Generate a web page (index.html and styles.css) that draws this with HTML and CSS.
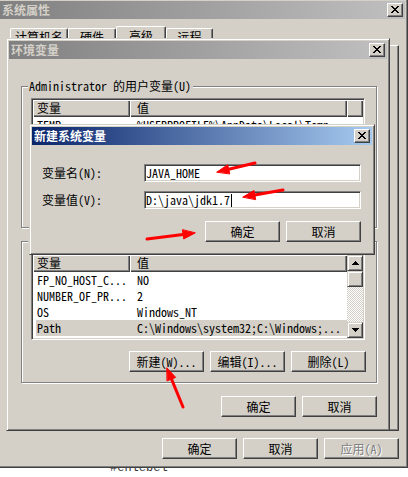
FILE: index.html
```html
<!DOCTYPE html>
<html lang="zh-CN">
<head>
<meta charset="utf-8">
<title>环境变量</title>
<link rel="stylesheet" href="styles.css">
</head>
<body>
<div class="desktop">
  <div class="page-text">#ehlebel</div>

  <div class="win sys">
    <div class="titlebar">
      <span class="title">系统属性</span>
      <span class="close"><svg width="14" height="12" viewBox="1 1 14 12"><path d="M4 3h2v1h1v1h2V4h1V3h2v1h-1v1h-1v1h-1v1h1v1h1v1h1v1h-2V9h-1V8H7v1H6v1H4V9h1V8h1V7h1V6H6V5H5V4H4z"/></svg></span>
    </div>
    <div class="tabs">
      <div class="tab t1">计算机名</div>
      <div class="tab t2">硬件</div>
      <div class="tab sel">高级</div>
      <div class="tab t4">远程</div>
    </div>
    <div class="tabpanel"></div>
    <div class="btnrow sys-btns">
      <button class="btn">确定</button>
      <button class="btn">取消</button>
      <button class="btn disabled">应用(A)</button>
    </div>
  </div>

  <div class="win env">
    <div class="titlebar">
      <span class="title">环境变量</span>
      <span class="close"><svg width="14" height="12" viewBox="1 1 14 12"><path d="M4 3h2v1h1v1h2V4h1V3h2v1h-1v1h-1v1h-1v1h1v1h1v1h1v1h-2V9h-1V8H7v1H6v1H4V9h1V8h1V7h1V6H6V5H5V4H4z"/></svg></span>
    </div>
    <div class="env-body">
      <div class="group g1">
        <div class="legend">Administrator 的用户变量(U)</div>
        <div class="list">
          <div class="lmain">
            <div class="lhead"><div class="hc c1">变量</div><div class="hc c2">值</div><div class="hc c3"></div></div>
            <div class="lrow"><span class="cell c1">TEMP</span><span class="cell c2">%USERPROFILE%\AppData\Local\Temp</span></div>
          </div>
        </div>
        <div class="btnrow">
          <button class="btn"></button>
          <button class="btn"></button>
          <button class="btn"></button>
        </div>
      </div>

      <div class="group g2">
        <div class="legend"></div>
        <div class="list">
          <div class="lmain">
            <div class="lhead"><div class="hc c1">变量</div><div class="hc c2 grow">值</div></div>
            <div class="lrow"><span class="cell c1">FP_NO_HOST_C...</span><span class="cell c2">NO</span></div>
            <div class="lrow"><span class="cell c1">NUMBER_OF_PR...</span><span class="cell c2">2</span></div>
            <div class="lrow"><span class="cell c1">OS</span><span class="cell c2">Windows_NT</span></div>
            <div class="lrow sel"><span class="cell c1">Path</span><span class="cell c2">C:\Windows\system32;C:\Windows;...</span></div>
          </div>
          <div class="vscroll">
            <div class="sb-btn"><svg width="14" height="14" viewBox="1 1 14 14"><path d="M8 6h1v1h1v1h1v1h1v1H5V9h1V8h1V7h1z"/></svg></div>
            <div class="sb-thumb"></div>
            <div class="sb-track"></div>
            <div class="sb-btn"><svg width="14" height="14" viewBox="1 1 14 14"><path d="M5 6h7v1h-1v1h-1v1h-1v1H8V9H7V8H6V7H5z"/></svg></div>
          </div>
        </div>
        <div class="btnrow">
          <button class="btn">新建(W)...</button>
          <button class="btn">编辑(I)...</button>
          <button class="btn">删除(L)</button>
        </div>
      </div>

      <div class="btnrow env-btns">
        <button class="btn">确定</button>
        <button class="btn">取消</button>
      </div>
    </div>
  </div>

  <div class="win newvar">
    <div class="titlebar active">
      <span class="title">新建系统变量</span>
      <span class="close"><svg width="14" height="12" viewBox="1 1 14 12"><path d="M4 3h2v1h1v1h2V4h1V3h2v1h-1v1h-1v1h-1v1h1v1h1v1h1v1h-2V9h-1V8H7v1H6v1H4V9h1V8h1V7h1V6H6V5H5V4H4z"/></svg></span>
    </div>
    <div class="nv-body">
      <div class="form">
        <label class="flabel">变量名(N):</label>
        <div class="input">JAVA_HOME</div>
        <label class="flabel">变量值(V):</label>
        <div class="input">D:\java\jdk1.7<span class="caret"></span></div>
      </div>
      <div class="btnrow nv-btns">
        <button class="btn">确定</button>
        <button class="btn">取消</button>
      </div>
    </div>
  </div>

  <svg class="arrows" width="408" height="477" viewBox="0 0 408 477">
    <g fill="#f00" stroke="#f00" stroke-linecap="round">
      <line x1="255" y1="163" x2="228.7" y2="169.2" stroke-width="3"/>
      <polygon points="217,172 227.7,164.8 229.7,173.6" stroke-width="1"/>
      <line x1="283" y1="190" x2="254.8" y2="194.9" stroke-width="3"/>
      <polygon points="243,197 254,190.5 255.6,199.3" stroke-width="1"/>
      <line x1="147" y1="239" x2="183.1" y2="234.5" stroke-width="3"/>
      <polygon points="195,233 183.7,239 182.5,230" stroke-width="1"/>
      <line x1="183" y1="407" x2="171.5" y2="379.1" stroke-width="3"/>
      <polygon points="167,368 175.7,377.4 167.3,380.8" stroke-width="1"/>
    </g>
  </svg>
</div>
</body>
</html>
```

FILE: styles.css
```css
* { box-sizing: border-box; }

body {
  margin: 0;
  background: #fff;
  font-family: "Noto Sans Mono CJK SC", "Noto Sans CJK SC", "Liberation Mono", monospace;
  font-size: 12px;
  color: #000;
}

.desktop {
  position: relative;
  width: 408px;
  height: 477px;
  overflow: hidden;
  background: #fff;
}

.page-text {
  padding: 462px 0 0 110px;
  font: 12px/12px "Liberation Mono", monospace;
  color: #333;
}

/* classic window frame */
.win {
  position: absolute;
  display: flex;
  flex-direction: column;
  background: #d4d0c8;
  border: 1px solid;
  border-color: #d4d0c8 #404040 #404040 #d4d0c8;
  box-shadow: inset 1px 1px #fff, inset -1px -1px #808080;
  padding: 2px;
}

.sys { left: -3px; top: -2px; width: 411px; height: 470px; }
.env { left: 6px; top: 38px; width: 384px; height: 393px; }
.newvar { left: 29px; top: 124px; width: 346px; height: 131px; }

.titlebar {
  flex: none;
  height: 18px;
  display: flex;
  align-items: flex-start;
  justify-content: space-between;
  padding-left: 2px;
  background: linear-gradient(90deg, #808080, #c0c0c0);
}
.titlebar.active { background: linear-gradient(90deg, #0a246a, #a6caf0); }

.title {
  font-family: "Noto Sans CJK SC", sans-serif;
  font-weight: bold;
  font-size: 12px;
  line-height: 18px;
  color: #d4d0c8;
}
.active .title { color: #fff; }

.close {
  width: 16px;
  height: 14px;
  margin: 2px 2px 0 0;
  background: #d4d0c8;
  border: 1px solid;
  border-color: #fff #404040 #404040 #fff;
  box-shadow: inset -1px -1px #808080;
}
.close svg { display: block; }

/* tabs of the 系统属性 window */
.tabs {
  flex: none;
  display: flex;
  align-items: flex-end;
  height: 19px;
  margin: 7px 0 0 10px;
}
.tab {
  height: 17px;
  padding-top: 2px;
  text-align: center;
  line-height: 12px;
  font-family: "Noto Sans CJK SC", sans-serif;
  border: 1px solid;
  border-bottom: 0;
  border-color: #fff #404040 transparent #fff;
  box-shadow: inset -1px 0 #808080;
  border-radius: 2px 2px 0 0;
}
.t1 { width: 58px; }
.t2 { width: 48px; }
.tab.sel { width: 50px; height: 19px; padding-top: 3px; }
.t4 { width: 47px; }

.tabpanel {
  flex: none;
  height: 386px;
  margin: 0 6px 0 8px;
  border: 1px solid;
  border-color: #fff #404040 #404040 #fff;
  box-shadow: inset -1px -1px #808080;
}

/* buttons */
.btnrow {
  flex: none;
  display: flex;
  justify-content: flex-end;
  gap: 6px;
}
.btn {
  width: 75px;
  height: 21px;
  padding: 0;
  display: flex;
  align-items: center;
  justify-content: center;
  font: inherit;
  line-height: 12px;
  color: #000;
  background: #d4d0c8;
  border: 1px solid;
  border-color: #fff #404040 #404040 #fff;
  box-shadow: inset -1px -1px #808080;
  border-radius: 0;
}
.btn.disabled { color: #808080; text-shadow: 1px 1px #fff; }

.sys-btns { margin-top: 7px; padding-right: 6px; }

/* 环境变量 body */
.env-body {
  flex: 1;
  display: flex;
  flex-direction: column;
  padding: 0 10px 0 12px;
}

.group {
  flex: none;
  height: 142px;
  display: flex;
  flex-direction: column;
  border: 1px solid #808080;
  box-shadow: inset 1px 1px #fff, 1px 1px #fff;
  padding: 0 10px 10px 9px;
}
.g1 { margin-top: 27px; }
.g2 { margin-top: 13px; }

.legend {
  align-self: flex-start;
  height: 12px;
  min-width: 60px;
  line-height: 12px;
  margin: -7px 0 0 -3px;
  padding: 0 2px 0 1px;
  background: #d4d0c8;
  white-space: nowrap;
}

.list {
  flex: none;
  height: 87px;
  margin: 6px 1px 0 0;
  display: flex;
  overflow: hidden;
  background: #fff;
  border: 1px solid;
  border-color: #808080 #fff #fff #808080;
  box-shadow: inset 1px 1px #404040, inset -1px -1px #d4d0c8;
  padding: 1px;
}
.group .btnrow { margin-top: 11px; }

.lmain { flex: 1; min-width: 0; }

.lhead { display: flex; height: 17px; }
.hc {
  height: 17px;
  line-height: 16px;
  padding-left: 4px;
  background: #d4d0c8;
  box-shadow: inset 1px 1px #fff, inset -1px -1px #404040, inset -2px -2px #808080;
}
.hc.c1 { width: 97px; }
.hc.c2 { width: 217px; padding-left: 7px; }
.hc.c2.grow { flex: 1; }
.hc.c3 { flex: 1; }

.lrow {
  display: flex;
  height: 16px;
  line-height: 16px;
  margin-left: 3px;
  white-space: nowrap;
}
.lrow.sel { background: #d4d0c8; }
.cell.c1 { width: 94px; padding-left: 1px; flex: none; }
.cell.c2 { padding-left: 7px; overflow: hidden; }

.vscroll {
  flex: none;
  width: 16px;
  display: flex;
  flex-direction: column;
}
.sb-btn, .sb-thumb {
  flex: none;
  height: 16px;
  background: #d4d0c8;
  border: 1px solid;
  border-color: #d4d0c8 #404040 #404040 #d4d0c8;
  box-shadow: inset 1px 1px #fff, inset -1px -1px #808080;
}
.sb-btn svg { display: block; }
.sb-track {
  flex: 1;
  background: repeating-conic-gradient(#fff 0 25%, #d4d0c8 0 50%) 0 0 / 2px 2px;
}

.env-btns { margin-top: 13px; }

/* 新建系统变量 body */
.nv-body {
  flex: 1;
  display: flex;
  flex-direction: column;
  padding: 19px 11px 0 10px;
}
.form {
  display: grid;
  grid-template-columns: 102px 217px;
  grid-auto-rows: 18px;
  row-gap: 9px;
  align-items: center;
}
.flabel { line-height: 18px; }
.input {
  height: 18px;
  line-height: 16px;
  padding-left: 1px;
  background: #fff;
  border: 1px solid;
  border-color: #808080 #fff #fff #808080;
  box-shadow: inset 1px 1px #404040, inset -1px -1px #d4d0c8;
  white-space: nowrap;
}
.caret {
  display: inline-block;
  width: 1px;
  height: 13px;
  margin-left: 1px;
  vertical-align: -2px;
  background: #000;
}
.nv-btns { margin-top: 12px; }

.arrows {
  position: absolute;
  left: 0;
  top: 0;
  pointer-events: none;
}
```
